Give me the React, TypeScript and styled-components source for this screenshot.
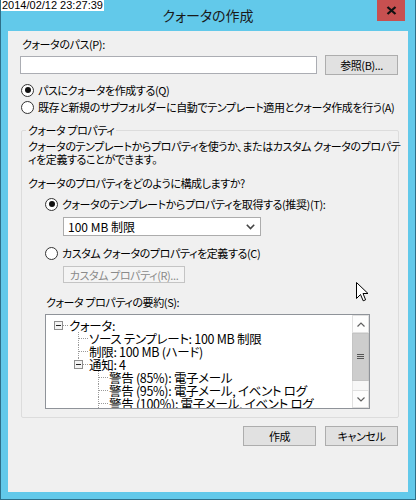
import React from "react";
import styled, { createGlobalStyle } from "styled-components";

const GlobalStyle = createGlobalStyle`
  html, body { margin: 0; padding: 0; background: #ffffff; }
  body { width: 416px; height: 500px; overflow: hidden; }
  * { box-sizing: border-box; }
`;

const jp = `"Noto Sans CJK JP", "Noto Sans", sans-serif`;

const Window = styled.div`
  position: relative;
  width: 416px;
  height: 500px;
  overflow: hidden;
  background: #62c9ea;
  border: 1px solid #2e6f89;
  border-top: none;
  display: flex;
  flex-direction: column;
  font-family: ${jp};
  font-size: 11px;
  letter-spacing: -0.4px;
  font-feature-settings: "palt" 1;
  color: #000;
`;

const Stamp = styled.div`
  position: absolute;
  left: 0;
  top: 0;
  background: #fff;
  color: #000;
  font-family: "Liberation Sans", Arial, sans-serif;
  font-size: 11px;
  letter-spacing: 0;
  line-height: 11px;
  padding: 0 1px;
  font-feature-settings: normal;
`;

const TitleBar = styled.div`
  height: 31px;
  flex: none;
  display: grid;
  grid-template-columns: 1fr auto 1fr;
`;

const Title = styled.div`
  grid-column: 2;
  font-size: 14px;
  letter-spacing: 0;
  line-height: 31px;
  color: #1a1a1a;
`;

const CloseButton = styled.div`
  grid-column: 3;
  justify-self: end;
  align-self: start;
  width: 28px;
  height: 21px;
  margin-right: 10px;
  background: #c75050;
  display: flex;
  align-items: center;
  justify-content: center;
`;

const Body = styled.div`
  flex: 1;
  display: flex;
  padding: 0 7px 7px 7px;
  min-height: 0;
  min-width: 0;
`;

const Content = styled.div`
  flex: 1;
  min-width: 0;
  overflow: hidden;
  background: #f0f0f0;
  display: flex;
  flex-direction: column;
`;

const Text = styled.div<{ $top: number; $left: number; $lh?: number }>`
  margin-top: ${(p) => p.$top}px;
  margin-left: ${(p) => p.$left}px;
  line-height: ${(p) => p.$lh ?? 14}px;
  white-space: nowrap;
`;

const PathRow = styled.div`
  display: flex;
  align-items: center;
  height: 20px;
  margin: 4px 0 0 12px;
`;

const TextBox = styled.div`
  width: 297px;
  height: 18px;
  background: #fff;
  border: 1px solid #abadb3;
`;

const Button = styled.div<{ $ml?: number; $w?: number; $disabled?: boolean; $h?: number }>`
  width: ${(p) => p.$w ?? 73}px;
  height: ${(p) => p.$h ?? 20}px;
  margin-left: ${(p) => p.$ml ?? 0}px;
  background: ${(p) => (p.$disabled ? "#f4f4f4" : "#e1e1e1")};
  border: 1px solid ${(p) => (p.$disabled ? "#c4c4c4" : "#adadad")};
  color: ${(p) => (p.$disabled ? "#8a8a8a" : "#000")};
  display: flex;
  align-items: center;
  justify-content: center;
  white-space: nowrap;
  flex: none;
`;

const RadioRow = styled.div<{ $top: number; $left: number }>`
  display: flex;
  align-items: center;
  gap: 4px;
  height: 16px;
  margin-top: ${(p) => p.$top}px;
  margin-left: ${(p) => p.$left}px;
  white-space: nowrap;
`;

const RadioCircle = styled.span<{ $checked?: boolean }>`
  width: 13px;
  height: 13px;
  border-radius: 50%;
  border: 1px solid #333;
  background: #fff;
  display: flex;
  align-items: center;
  justify-content: center;
  flex: none;
  &::after {
    content: "";
    width: 6px;
    height: 6px;
    border-radius: 50%;
    background: ${(p) => (p.$checked ? "#111" : "transparent")};
  }
`;

const Group = styled.fieldset`
  margin: 8px 0 0 13px;
  width: 378px;
  border: 1px solid #dcdcdc;
  border-radius: 2px;
  padding: 0 6px 8px 6px;
  min-width: 0;
`;

const Legend = styled.legend`
  padding: 0 2px;
  margin-left: -2px;
  line-height: 14px;
`;

const Select = styled.div`
  margin: 5px 0 0 35px;
  width: 198px;
  height: 19px;
  background: #fff;
  border: 1px solid #acacac;
  display: flex;
  align-items: center;
  justify-content: space-between;
  padding: 0 5px 0 4px;
  white-space: nowrap;
  font-size: 12px;
  letter-spacing: 0;
`;

const TreeBox = styled.div`
  margin: 5px 0 0 17px;
  width: 325px;
  height: 95px;
  border: 1px solid #8f9399;
  background: #fff;
  display: flex;
`;

const TreeBody = styled.div`
  flex: 1;
  overflow: hidden;
  padding: 4px 0 0 3px;
  font-size: 12.5px;
  letter-spacing: -0.3px;
`;

const TreeRow = styled.div<{ $depth: number }>`
  display: flex;
  align-items: center;
  height: 13px;
  line-height: 13px;
  padding-left: ${(p) => p.$depth * 20}px;
  white-space: nowrap;
`;

const ScrollBar = styled.div`
  width: 17px;
  flex: none;
  display: flex;
  flex-direction: column;
  background: #f7f7f7;
`;

const ArrowBtn = styled.div`
  height: 18px;
  border: 1px solid #e0e0e0;
  background: #fdfdfd;
  display: flex;
  align-items: center;
  justify-content: center;
`;

const Thumb = styled.div`
  height: 48px;
  background: #cdcdcd;
  border: 1px solid #c4c4c4;
  display: flex;
  align-items: center;
  justify-content: center;
`;

const Track = styled.div`
  flex: 1;
  border-left: 1px solid #e6e6e6;
  border-right: 1px solid #e6e6e6;
`;

const ButtonRow = styled.div`
  display: flex;
  justify-content: flex-end;
  gap: 9px;
  margin: 8px 10px 0 0;
`;

const Cursor = styled.svg`
  position: absolute;
  left: 355px;
  top: 282px;
`;

type Kind = "root" | "mid" | "lastExp" | "leaf";

const dot = { stroke: "#9a9a9a", strokeWidth: 1, strokeDasharray: "1 1" } as const;

function Expander() {
  return (
    <>
      <rect x={5.5} y={2.5} width={8} height={8} fill="#f4f4f4" stroke="#8e8e8e" />
      <line x1={7} y1={6.5} x2={12} y2={6.5} stroke="#222" />
    </>
  );
}

function Cell({ kind }: { kind: Kind }) {
  return (
    <svg width={20} height={13} style={{ flex: "none" }}>
      {kind === "root" && (
        <>
          <line x1={14} y1={6.5} x2={20} y2={6.5} {...dot} />
          <Expander />
        </>
      )}
      {kind === "lastExp" && (
        <>
          <line x1={9.5} y1={0} x2={9.5} y2={2} {...dot} />
          <line x1={14} y1={6.5} x2={20} y2={6.5} {...dot} />
          <Expander />
        </>
      )}
      {(kind === "mid" || kind === "leaf") && (
        <>
          <line x1={9.5} y1={0} x2={9.5} y2={13} {...dot} />
          <line x1={10} y1={6.5} x2={19} y2={6.5} {...dot} />
        </>
      )}
    </svg>
  );
}

const rows: { depth: number; kind: Kind; text: string }[] = [
  { depth: 0, kind: "root", text: "クォータ:" },
  { depth: 1, kind: "mid", text: "ソース テンプレート: 100 MB 制限" },
  { depth: 1, kind: "mid", text: "制限: 100 MB (ハード)" },
  { depth: 1, kind: "lastExp", text: "通知: 4" },
  { depth: 2, kind: "leaf", text: "警告 (85%): 電子メール" },
  { depth: 2, kind: "leaf", text: "警告 (95%): 電子メール, イベント ログ" },
  { depth: 2, kind: "leaf", text: "警告 (100%): 電子メール, イベント ログ" },
];

function Chevron({ up }: { up?: boolean }) {
  return (
    <svg width={8} height={5} viewBox="0 0 8 5">
      <path
        d={up ? "M0.5 4.5 L4 1 L7.5 4.5" : "M0.5 0.5 L4 4 L7.5 0.5"}
        fill="none"
        stroke="#606060"
        strokeWidth={1.2}
      />
    </svg>
  );
}

export default function App() {
  return (
    <>
      <GlobalStyle />
      <Window>
        <TitleBar>
          <Title>クォータの作成</Title>
          <CloseButton>
            <svg width={11} height={9} viewBox="0 0 11 9">
              <path d="M1.5 1 L9.5 8 M9.5 1 L1.5 8" stroke="#111" strokeWidth={2.3} />
            </svg>
          </CloseButton>
        </TitleBar>
        <Body>
          <Content>
            <Text $top={6} $left={14}>クォータのパス(P):</Text>
            <PathRow>
              <TextBox />
              <Button $ml={8}>参照(B)...</Button>
            </PathRow>
            <RadioRow $top={7} $left={13}>
              <RadioCircle $checked />
              <span>パスにクォータを作成する(Q)</span>
            </RadioRow>
            <RadioRow $top={1} $left={13}>
              <RadioCircle />
              <span>既存と新規のサブフォルダーに自動でテンプレート適用とクォータ作成を行う(A)</span>
            </RadioRow>
            <Group>
              <Legend>クォータ プロパティ</Legend>
              <Text $top={3} $left={0} $lh={13}>
                クォータのテンプレートからプロパティを使うか、またはカスタム クォータのプロパテ
                <br />
                ィを定義することができます。
              </Text>
              <Text $top={10} $left={0}>クォータのプロパティをどのように構成しますか?</Text>
              <RadioRow $top={6} $left={17}>
                <RadioCircle $checked />
                <span>クォータのテンプレートからプロパティを取得する(推奨)(T):</span>
              </RadioRow>
              <Select>
                <span>100 MB 制限</span>
                <svg width={9} height={6} viewBox="0 0 9 6">
                  <path d="M0.8 0.8 L4.5 4.5 L8.2 0.8" fill="none" stroke="#444" strokeWidth={1.6} />
                </svg>
              </Select>
              <RadioRow $top={9} $left={17}>
                <RadioCircle />
                <span>カスタム クォータのプロパティを定義する(C)</span>
              </RadioRow>
              <Button $disabled $w={122} $h={17} $ml={35} style={{ marginTop: 5 }}>
                カスタム プロパティ(R)...
              </Button>
              <Text $top={12} $left={18}>クォータ プロパティの要約(S):</Text>
              <TreeBox>
                <TreeBody>
                  {rows.map((r, i) => (
                    <TreeRow key={i} $depth={r.depth}>
                      <Cell kind={r.kind} />
                      <span>{r.text}</span>
                    </TreeRow>
                  ))}
                </TreeBody>
                <ScrollBar>
                  <ArrowBtn>
                    <Chevron up />
                  </ArrowBtn>
                  <Thumb>
                    <svg width={7} height={6} viewBox="0 0 7 6">
                      <path d="M0 0.5 H7 M0 2.5 H7 M0 4.5 H7" stroke="#555" strokeWidth={1} />
                    </svg>
                  </Thumb>
                  <Track />
                  <ArrowBtn>
                    <Chevron />
                  </ArrowBtn>
                </ScrollBar>
              </TreeBox>
            </Group>
            <ButtonRow>
              <Button>作成</Button>
              <Button>キャンセル</Button>
            </ButtonRow>
          </Content>
        </Body>
        <Stamp>2014/02/12 23:27:39</Stamp>
        <Cursor width={13} height={20} viewBox="0 0 13 20">
          <path
            d="M0.5 0.5 L0.5 16.5 L4.5 12.5 L7.2 18.8 L9.6 17.8 L7 11.5 L12 11.5 Z"
            fill="#fff"
            stroke="#000"
            strokeWidth={1}
          />
        </Cursor>
      </Window>
    </>
  );
}
